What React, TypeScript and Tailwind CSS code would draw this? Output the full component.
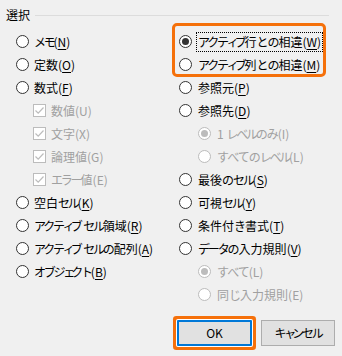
import React from "react";

type Item = {
  kind: "radio" | "check";
  text: string;
  mn?: string;
  checked?: boolean;
  disabled?: boolean;
  indent?: boolean;
  focus?: boolean;
};

const SMALL = "ァィゥェォャュョッヮ";

function jp(text: string) {
  return Array.from(text).map((ch, i) => {
    if (SMALL.includes(ch)) {
      return (
        <span key={i} className="tracking-[-4px]">
          {ch}
        </span>
      );
    }
    if (ch === "ー") {
      return (
        <span key={i} className="tracking-[-2px]">
          {ch}
        </span>
      );
    }
    if (/[\u30a0-\u30ff]/.test(ch)) {
      return (
        <span key={i} className="tracking-[-2.25px]">
          {ch}
        </span>
      );
    }
    if (/[\u3040-\u309f]/.test(ch)) {
      return (
        <span key={i} className="tracking-[-1px]">
          {ch}
        </span>
      );
    }
    return <React.Fragment key={i}>{ch}</React.Fragment>;
  });
}

function Radio({ checked, disabled }: { checked?: boolean; disabled?: boolean }) {
  return (
    <span
      className={`flex h-[13px] w-[13px] shrink-0 items-center justify-center rounded-full border bg-white ${
        disabled ? "border-[#bcbcbc]" : "border-[#333333]"
      }`}
    >
      {checked && (
        <span className={`h-[7px] w-[7px] rounded-full ${disabled ? "bg-[#bcbcbc]" : "bg-[#333333]"}`} />
      )}
    </span>
  );
}

function Check() {
  return (
    <span className="flex h-[13px] w-[13px] shrink-0 items-center justify-center border border-[#bcbcbc] bg-white">
      <svg width="11" height="11" viewBox="0 0 11 11" fill="none">
        <path d="M1.5 5.5 L4.2 8.2 L9.5 2.5" stroke="#bcbcbc" strokeWidth="1.2" />
      </svg>
    </span>
  );
}

function Label({ item }: { item: Item }) {
  const color = item.disabled ? "text-[#a0a0a0]" : "text-black";
  const inner = item.mn ? (
    <>
      {jp(item.text)}(<span className="underline underline-offset-2 decoration-1">{item.mn}</span>)
    </>
  ) : (
    jp(item.text)
  );
  return (
    <span
      className={`whitespace-pre ${color} ${
        item.focus ? "outline outline-1 outline-dotted outline-black outline-offset-[1px]" : ""
      }`}
    >
      {inner}
    </span>
  );
}

function Row({ item, right }: { item: Item; right?: boolean }) {
  const indent = item.indent ? (right ? "pl-[19px]" : "pl-[17px]") : "";
  return (
    <div className={`flex h-[23px] items-center ${right ? "gap-[6px]" : "gap-[5px]"} ${indent}`}>
      {item.kind === "radio" ? <Radio checked={item.checked} disabled={item.disabled} /> : <Check />}
      <Label item={item} />
    </div>
  );
}

const left: Item[] = [
  { kind: "radio", text: "メモ", mn: "N" },
  { kind: "radio", text: "定数", mn: "O" },
  { kind: "radio", text: "数式", mn: "F" },
  { kind: "check", text: "数値(U)", disabled: true, indent: true },
  { kind: "check", text: "文字(X)", disabled: true, indent: true },
  { kind: "check", text: "論理値(G)", disabled: true, indent: true },
  { kind: "check", text: "エラー値(E)", disabled: true, indent: true },
  { kind: "radio", text: "空白セル", mn: "K" },
  { kind: "radio", text: "アクティブ セル領域", mn: "R" },
  { kind: "radio", text: "アクティブ セルの配列", mn: "A" },
  { kind: "radio", text: "オブジェクト", mn: "B" },
];

const right: Item[] = [
  { kind: "radio", text: "アクティブ行との相違", mn: "W", checked: true, focus: true },
  { kind: "radio", text: "アクティブ列との相違", mn: "M" },
  { kind: "radio", text: "参照元", mn: "P" },
  { kind: "radio", text: "参照先", mn: "D" },
  { kind: "radio", text: "1 レベルのみ(I)", checked: true, disabled: true, indent: true },
  { kind: "radio", text: "すべてのレベル(L)", disabled: true, indent: true },
  { kind: "radio", text: "最後のセル", mn: "S" },
  { kind: "radio", text: "可視セル", mn: "Y" },
  { kind: "radio", text: "条件付き書式", mn: "T" },
  { kind: "radio", text: "データの入力規則", mn: "V" },
  { kind: "radio", text: "すべて(L)", checked: true, disabled: true, indent: true },
  { kind: "radio", text: "同じ入力規則(E)", disabled: true, indent: true },
];

export default function App() {
  return (
    <div className="relative h-[356px] w-[342px] overflow-hidden bg-[#f0f0f0] font-['Noto_Sans_CJK_JP',sans-serif] text-[12px] leading-[16px] text-black">
      <div className="flex h-[30px] items-center pl-[6px] pr-[13px]">
        <span>選択</span>
        <div className="ml-[5px] h-px flex-1 bg-[#dcdcdc]" />
      </div>
      <div className="flex">
        <div className="flex w-[179px] flex-col pl-[16px]">
          {left.map((it, i) => (
            <Row key={i} item={it} />
          ))}
        </div>
        <div className="flex flex-1 flex-col">
          {right.map((it, i) => (
            <Row key={i} item={it} right />
          ))}
        </div>
      </div>
      <div className="mt-[14px] flex justify-end gap-[9px] pr-[7px]">
        <button className="h-[26px] w-[75px] rounded-[1px] border-2 border-[#0078d7] bg-[#e1e1e1] text-black shadow-[0_0_0_1px_#ffffff,0_0_0_4px_#f5700a]">
          OK
        </button>
        <button className="h-[26px] w-[74px] border border-[#adadad] bg-[#e1e1e1] text-black">
          {jp("キャンセル")}
        </button>
      </div>
      <div className="pointer-events-none absolute left-[172px] top-[23px] h-[54px] w-[154px] rounded-[5px] border-[3px] border-[#f5700a]" />
    </div>
  );
}
